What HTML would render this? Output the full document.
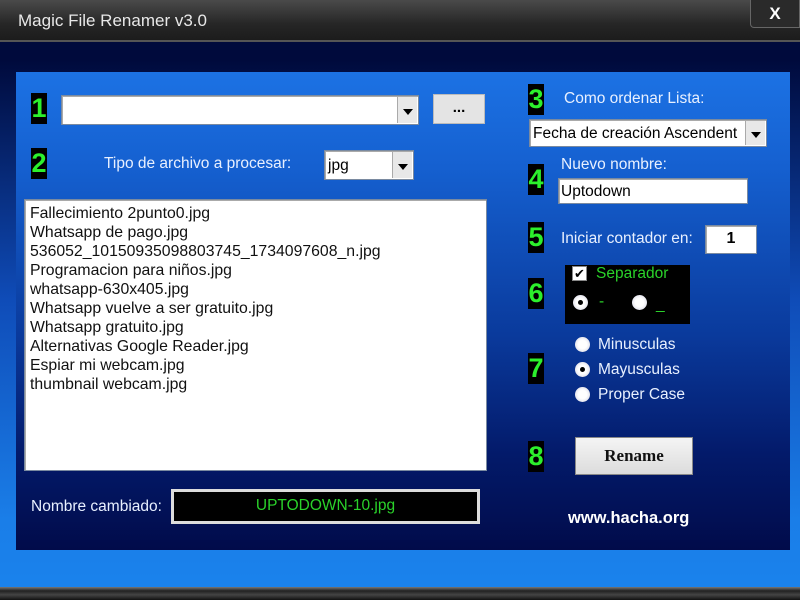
<!DOCTYPE html>
<html><head><meta charset="utf-8"><style>
*{margin:0;padding:0;box-sizing:border-box}
body{width:800px;height:600px;overflow:hidden;position:relative;font-family:"Liberation Sans","DejaVu Sans",sans-serif;background:linear-gradient(#000a3c 0,#000a3c 60px,#0f4cb8 300px,#1a7ee8 520px,#1a82ec 585px)}
.a{position:absolute}
#tb{left:0;top:0;width:800px;height:42px;background:linear-gradient(#4a4a4a,#262626 60%,#1c1c1c);border-bottom:2px solid #555}
#tt{left:14px;top:11px;color:#e8e8e8;font-size:17px;padding:0 4px;}
#x{left:750px;top:0;width:50px;height:28px;border:1px solid #666;border-top:none;color:#fff;font-weight:bold;font-size:17px;text-align:center;line-height:27px;background:#2a2a2a;border-radius:0 0 0 4px}
#pn{left:16px;top:72px;width:774px;height:478px;background:linear-gradient(#1c72e4 0,#1560d0 20%,#0a3a9c 55%,#031a6a 80%,#010b4a 100%)}
.n{position:absolute;background:#000;color:#2cf02c;font-weight:bold;font-size:27px;width:16px;height:31px;line-height:31px;text-align:center}
.w{position:absolute;background:#fff;border:1px solid #7a8aa0;box-shadow:inset 1px 1px 0 #aaa}
.dd{position:absolute;right:1px;top:1px;bottom:1px;width:20px;background:#e8e8e8;border-left:1px solid #aaa}
.dd:after{content:"";position:absolute;left:5px;top:45%;border:5px solid transparent;border-top:6px solid #000;border-bottom:0}
.t{position:absolute;color:#e8f0ff;font-size:15.5px;white-space:nowrap}
#bot{left:0;top:587px;width:800px;height:13px;background:linear-gradient(#777,#222 30%,#444 60%,#111)}
.r{position:absolute;width:15px;height:15px;border-radius:50%;background:radial-gradient(#fff 40%,#ccd 100%)}
.r.s:after{content:"";position:absolute;left:5px;top:5px;width:5px;height:5px;border-radius:50%;background:#000}
</style></head><body>
<div id="tb" class="a"></div>
<div id="tt" class="a">Magic File Renamer v3.0</div>
<div id="x" class="a">X</div>
<div id="pn" class="a"></div>
<div id="bot" class="a"></div>

<div class="n" style="left:31px;top:93px">1</div>
<div class="w" style="left:61px;top:95px;width:358px;height:30px"><div class="dd"></div></div>
<div class="a" style="left:433px;top:94px;width:52px;height:30px;background:#e4e4e4;border:1px solid #bbb;text-align:center;font-size:15px;line-height:26px;font-weight:bold">...</div>

<div class="n" style="left:31px;top:148px">2</div>
<div class="t" style="left:104px;top:155px">Tipo de archivo a procesar:</div>
<div class="w" style="left:324px;top:150px;width:90px;height:30px;font-size:15.5px;padding:6px 3px">jpg<div class="dd"></div></div>

<div class="w" style="left:24px;top:199px;width:463px;height:272px;font-size:15.8px;line-height:19px;padding:4px 5px;color:#111">
Fallecimiento 2punto0.jpg<br>Whatsapp de pago.jpg<br>536052_10150935098803745_1734097608_n.jpg<br>Programacion para niños.jpg<br>whatsapp-630x405.jpg<br>Whatsapp vuelve a ser gratuito.jpg<br>Whatsapp gratuito.jpg<br>Alternativas Google Reader.jpg<br>Espiar mi webcam.jpg<br>thumbnail webcam.jpg</div>

<div class="t" style="left:31px;top:498px">Nombre cambiado:</div>
<div class="a" style="left:171px;top:489px;width:309px;height:35px;background:#000;border:3px solid #ddd;color:#2ad22a;font-size:15.5px;text-align:center;line-height:27px">UPTODOWN-10.jpg</div>

<div class="n" style="left:528px;top:84px">3</div>
<div class="t" style="left:564px;top:90px">Como ordenar Lista:</div>
<div class="w" style="left:529px;top:119px;width:238px;height:28px;font-size:15.5px;padding:5px 3px;overflow:hidden;white-space:nowrap">Fecha de creación Ascendent<div class="dd"></div></div>

<div class="n" style="left:528px;top:164px">4</div>
<div class="t" style="left:561px;top:156px">Nuevo nombre:</div>
<div class="w" style="left:558px;top:178px;width:190px;height:26px;font-size:15.5px;padding:4px 2px">Uptodown</div>

<div class="n" style="left:528px;top:222px">5</div>
<div class="t" style="left:561px;top:230px">Iniciar contador en:</div>
<div class="w" style="left:705px;top:225px;width:52px;height:29px;font-size:16px;font-weight:bold;text-align:center;line-height:26px">1</div>

<div class="n" style="left:528px;top:278px">6</div>
<div class="a" style="left:565px;top:265px;width:125px;height:59px;background:#000"></div>
<div class="a" style="left:572px;top:266px;width:15px;height:15px;background:#fff;border:1px solid #888;font-size:13px;line-height:13px;text-align:center;font-weight:bold">✔</div>
<div class="t" style="left:596px;top:265px;color:#2ad22a">Separador</div>
<div class="r s" style="left:573px;top:295px"></div>
<div class="t" style="left:599px;top:293px;color:#2ad22a">-</div>
<div class="r" style="left:632px;top:295px"></div>
<div class="t" style="left:656px;top:296px;color:#2ad22a">_</div>

<div class="n" style="left:528px;top:353px">7</div>
<div class="r" style="left:575px;top:337px"></div>
<div class="t" style="left:598px;top:336px">Minusculas</div>
<div class="r s" style="left:575px;top:362px"></div>
<div class="t" style="left:598px;top:361px">Mayusculas</div>
<div class="r" style="left:575px;top:387px"></div>
<div class="t" style="left:598px;top:386px">Proper Case</div>

<div class="n" style="left:528px;top:441px">8</div>
<div class="a" style="left:575px;top:437px;width:118px;height:38px;background:linear-gradient(#f4f4f4,#dcdcdc);border:1px solid #888;font-family:'Liberation Serif',serif;font-weight:bold;font-size:17px;text-align:center;line-height:36px;color:#111">Rename</div>

<div class="t" style="left:568px;top:509px;font-weight:bold;font-size:16.5px;color:#fff">www.hacha.org</div>
</body></html>
